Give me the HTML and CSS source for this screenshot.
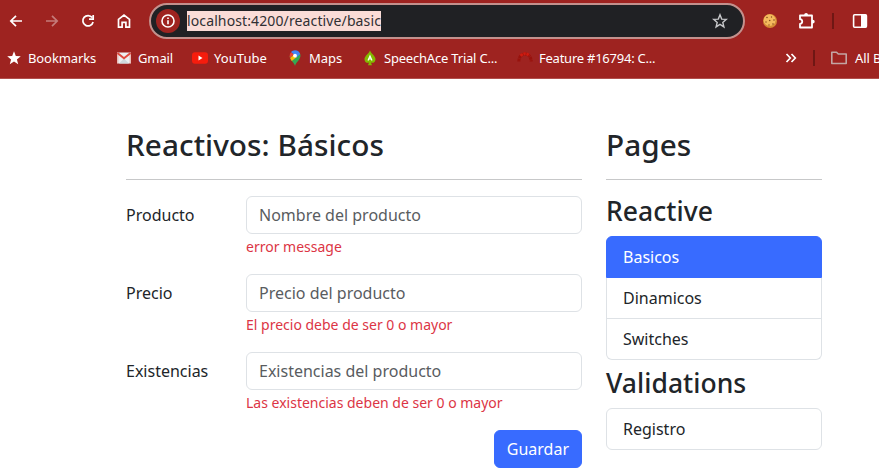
FILE: index.html
```html
<!DOCTYPE html>
<html lang="es">
<head>
<meta charset="utf-8">
<title>Reactivos: Básicos</title>
<link rel="stylesheet" href="styles.css">
</head>
<body>
<header class="browser">
  <div class="toolbar">
    <nav class="nav-buttons">
      <svg viewBox="0 0 16 16"><path d="M14 8H3M8 2.8L2.8 8L8 13.2"/></svg>
      <svg class="dim" viewBox="0 0 16 16"><path d="M2 8H13M8 2.8L13.2 8L8 13.2"/></svg>
      <svg viewBox="0 0 16 16"><path d="M12.2 4.6A5.2 5.2 0 1 0 13.1 9M13.2 2V6.2H9"/></svg>
      <svg viewBox="0 0 16 16"><path d="M2.5 14.2V6.3L8 2L13.5 6.3V14.2H9.9V9.3H6.1V14.2Z"/></svg>
    </nav>
    <div class="omnibox">
      <span class="site-info"><svg viewBox="0 0 16 16"><circle cx="8" cy="8" r="6"/><path d="M8 7.3V11.2M8 4.6V6"/></svg></span>
      <span class="url">localhost:4200/reactive/basic</span>
      <svg class="star" viewBox="0 0 16 16"><path d="M8 1.8L9.7 6.1L14.3 6.4L10.8 9.4L11.9 13.9L8 11.4L4.1 13.9L5.2 9.4L1.7 6.4L6.3 6.1Z"/></svg>
    </div>
    <div class="extensions">
      <svg class="cookie" viewBox="0 0 16 16"><circle cx="8" cy="8" r="7" fill="#d58b34"/><circle cx="7.6" cy="7.2" r="5.9" fill="#f4ba5e"/><g fill="#874d20"><circle cx="5" cy="4.5" r=".8"/><circle cx="9.5" cy="4" r=".7"/><circle cx="12" cy="7" r=".8"/><circle cx="7.7" cy="7.5" r=".8"/><circle cx="4" cy="9" r=".7"/><circle cx="7" cy="12" r=".7"/><circle cx="11" cy="11" r=".8"/></g></svg>
      <svg class="puzzle" viewBox="0 0 18 18"><path d="M2 3.5H14V15.5H2V12C5 11.8 5 7.4 2 7.2Z"/><path class="solid" d="M6.2 3.5V2.8A1.9 1.9 0 0 1 10 2.8V3.5ZM14 7.7H14.8A1.9 1.9 0 0 1 14.8 11.5H14Z"/></svg>
      <i class="divider"></i>
      <svg class="panel" viewBox="0 0 16 16"><rect x="1.6" y="1.7" width="12.8" height="12.6" rx="1"/><path class="solid" d="M9 1.7H14.4V14.3H9Z"/></svg>
    </div>
  </div>
  <div class="bookmarks">
    <span class="bookmark b1"><svg viewBox="0 0 16 16"><path fill="#fff" d="M8 1.2L9.8 5.9L14.8 6.2L10.9 9.4L12.2 14.3L8 11.5L3.8 14.3L5.1 9.4L1.2 6.2L6.2 5.9Z"/></svg><span>Bookmarks</span></span>
    <span class="bookmark b2"><svg viewBox="0 0 16 16"><path fill="#eceff1" d="M1 2.5H15V13.5H1Z"/><path fill="#cfd8dc" d="M3 13.5L8 8.5L13 13.5Z"/><path fill="none" stroke="#e24436" stroke-width="1.5" d="M1.7 13.5V3.4M14.3 3.4V13.5" opacity=".3"/><path fill="none" stroke="#e04a3f" stroke-width="2" d="M1.4 3L8 8.3L14.6 3"/></svg><span>Gmail</span></span>
    <span class="bookmark b3"><svg viewBox="0 0 16 16"><rect y="2.3" width="16" height="11.5" rx="3" fill="#f61c0d"/><path fill="#fff" d="M6.5 5.6L10.5 8L6.5 10.4Z"/></svg><span>YouTube</span></span>
    <span class="bookmark b4"><svg viewBox="0 0 16 16"><path fill="#34a853" d="M8 16C7.5 13 3 10 2.6 6L13.3 4C14.5 9.5 9 11.5 8 16Z"/><path fill="#fbbc04" d="M3.2 8L7 4.5L9.7 7L4.8 11C4 10 3.5 9 3.2 8Z"/><path fill="#4285f4" d="M8 .3C10.6.3 12.5 1.9 13.2 4L9.5 7.5L5 3L4 2.2C5 1 6.5.3 8 .3Z"/><path fill="#ea4335" d="M4 2.2L6.8 4.5L3 8C2.3 6 2.7 3.6 4 2.2Z"/><circle cx="8" cy="5.7" r="1.9" fill="#fff"/></svg><span>Maps</span></span>
    <span class="bookmark b5"><svg viewBox="0 0 16 16"><path fill="#83b900" d="M8 .5C9 3.5 13.5 6 13.5 9.2C13.5 12.4 10.5 13.6 8.9 12.4L10 15.3H6L7.1 12.4C5.5 13.6 2.5 12.4 2.5 9.2C2.5 6 7 3.5 8 .5Z"/><path fill="none" stroke="#fff" stroke-width="1.2" d="M6 10.5L8 6L10 10.5M6.8 9H9.2"/></svg><span>SpeechAce Trial C...</span></span>
    <span class="bookmark b6"><svg viewBox="0 0 16 16"><path fill="none" stroke="#98120c" stroke-width="3" stroke-dasharray="2.8 .6" d="M1.8 11.5C2 1.5 14 1.5 14.2 11.5"/><path fill="none" stroke="#cf1b10" stroke-width="2.8" stroke-dasharray="2.5 .7" d="M3.5 5.7Q8 1.8 12.5 5.7"/></svg><span>Feature #16794: C...</span></span>
    <div class="overflow">
      <svg class="chevrons" viewBox="0 0 12 12"><path d="M1.5 2L5.3 6L1.5 10M6.5 2L10.3 6L6.5 10"/></svg>
      <i class="divider"></i>
      <svg class="folder" viewBox="0 0 18 14"><path d="M1.8 1.2H6.5L8.3 3H16.2V12.5H1.8Z"/></svg>
      <span>All Bookmarks</span>
    </div>
  </div>
</header>
<main class="container">
  <section class="form-column">
    <h2>Reactivos: Básicos</h2>
    <hr>
    <form>
      <div class="row"><label for="name">Producto</label><div class="field"><input id="name" placeholder="Nombre del producto"><span class="error">error message</span></div></div>
      <div class="row"><label for="price">Precio</label><div class="field"><input id="price" placeholder="Precio del producto"><span class="error">El precio debe de ser 0 o mayor</span></div></div>
      <div class="row"><label for="stock">Existencias</label><div class="field"><input id="stock" placeholder="Existencias del producto"><span class="error">Las existencias deben de ser 0 o mayor</span></div></div>
      <div class="actions"><button type="button">Guardar</button></div>
    </form>
  </section>
  <aside class="side-column">
    <h2>Pages</h2>
    <hr>
    <h3>Reactive</h3>
    <ul><li class="active">Basicos</li><li>Dinamicos</li><li>Switches</li></ul>
    <h3 class="spaced">Validations</h3>
    <ul><li>Registro</li></ul>
  </aside>
</main>
</body>
</html>
```
FILE: styles.css
```css
* { box-sizing: border-box; }
html, body { height: 100%; }
body { margin: 0; overflow: hidden; background: #fff; color: #212529; font: 16px/1.5 "Noto Sans", sans-serif; }
svg { display: block; flex: none; fill: none; }
.browser { height: 79px; overflow: hidden; background: #9e2320; border-bottom: 1px solid #b14f4c; color: #fff; font-size: 13px; }
.toolbar { display: flex; align-items: center; height: 42px; }
.nav-buttons { display: flex; gap: 20px; margin-left: 8px; width: 141px; }
.nav-buttons svg { width: 16px; height: 16px; stroke: #fff; stroke-width: 1.7; }
.nav-buttons .dim { opacity: .4; }
.omnibox { display: flex; align-items: center; width: 596px; height: 36px; padding: 0 15px 0 5px; border: 2px solid #c3918d; border-radius: 18px; background: #202124; }
.site-info { display: flex; align-items: center; justify-content: center; width: 24px; height: 24px; margin-right: 7px; border-radius: 50%; background: #9e2320; }
.site-info svg { width: 16px; height: 16px; stroke: #fff; stroke-width: 1.6; }
.url { height: 20px; background: #fadcd7; color: #303033; font-size: 14px; line-height: 20px; letter-spacing: .12px; }
.star { width: 16px; height: 16px; margin-left: auto; stroke: #c7c8ca; stroke-width: 1.4; }
.extensions { display: flex; align-items: center; margin-left: 17px; }
.cookie { width: 16px; height: 16px; }
.puzzle { width: 18px; height: 18px; margin-left: 20px; stroke: #fff; stroke-width: 1.8; stroke-linejoin: round; }
.puzzle .solid { fill: #fff; stroke: none; }
.divider { flex: none; width: 2px; height: 16px; background: #6f1714; }
.extensions .divider { margin-left: 16px; }
.panel { width: 16px; height: 16px; margin-left: 18px; stroke: #fff; stroke-width: 1.6; }
.panel .solid { fill: #fff; stroke: none; }
.bookmarks { display: flex; align-items: center; height: 32px; padding-left: 6px; white-space: nowrap; letter-spacing: -.1px; }
.bookmark { display: flex; flex: none; align-items: center; gap: 6px; }
.bookmark span, .overflow span { padding-top: 2px; }
.bookmark svg { width: 16px; height: 16px; }
.b1 { width: 110px; }
.b2 { width: 76px; }
.b3 { width: 95px; letter-spacing: .05px; }
.b4 { width: 75px; letter-spacing: 0; }
.b5 { width: 155px; letter-spacing: -.2px; }
.b6 { width: 268px; letter-spacing: -.24px; }
.overflow { display: flex; flex: none; align-items: center; }
.chevrons { width: 12px; height: 12px; stroke: #fff; stroke-width: 1.7; }
.overflow .divider { margin: 0 15px 0 16px; }
.folder { width: 18px; height: 14px; margin-right: 7px; stroke: #c3a5a3; stroke-width: 1.6; stroke-linejoin: round; }
.container { display: flex; gap: 24px; width: 696px; margin: 48.6px 0 0 126px; }
.form-column { width: 456px; }
.side-column { width: 216px; }
h2, h3 { margin: 0 0 8px; font-weight: 500; line-height: 1.2; letter-spacing: .05px; }
h2 { height: 35.68px; font-size: 29.73px; line-height: 34px; }
h3 { font-size: 26.49px; }
.spaced { margin-top: 8px; }
hr { margin: 16px 0; border: 0; border-top: 1px solid #212529; opacity: .25; }
.row { display: flex; margin-bottom: 16px; }
.row label { width: 120px; padding-top: 7px; }
.field { width: 336px; }
input { display: block; width: 100%; height: 38px; padding: 6px 12px; border: 1px solid #dee2e6; border-radius: 6px; background: #fff; color: #212529; font: inherit; }
input::placeholder { color: #595c5f; opacity: 1; }
.error { display: block; height: 24px; color: #dc3545; font-size: 14px; line-height: 25px; }
.actions { display: flex; justify-content: flex-end; }
button { height: 38px; padding: 6px 12px; border: 1px solid #386bff; border-radius: 6px; background: #386bff; color: #fff; font: inherit; }
ul { margin: 0; padding: 0; list-style: none; border-radius: 6px; }
li { padding: 8px 16px; border: 1px solid #dee2e6; }
li + li { border-top: 0; }
li:first-child { border-radius: 6px 6px 0 0; }
li:last-child { border-radius: 0 0 6px 6px; }
li:only-child { border-radius: 6px; }
.active { border-color: #386bff; background: #386bff; color: #fff; }
```
